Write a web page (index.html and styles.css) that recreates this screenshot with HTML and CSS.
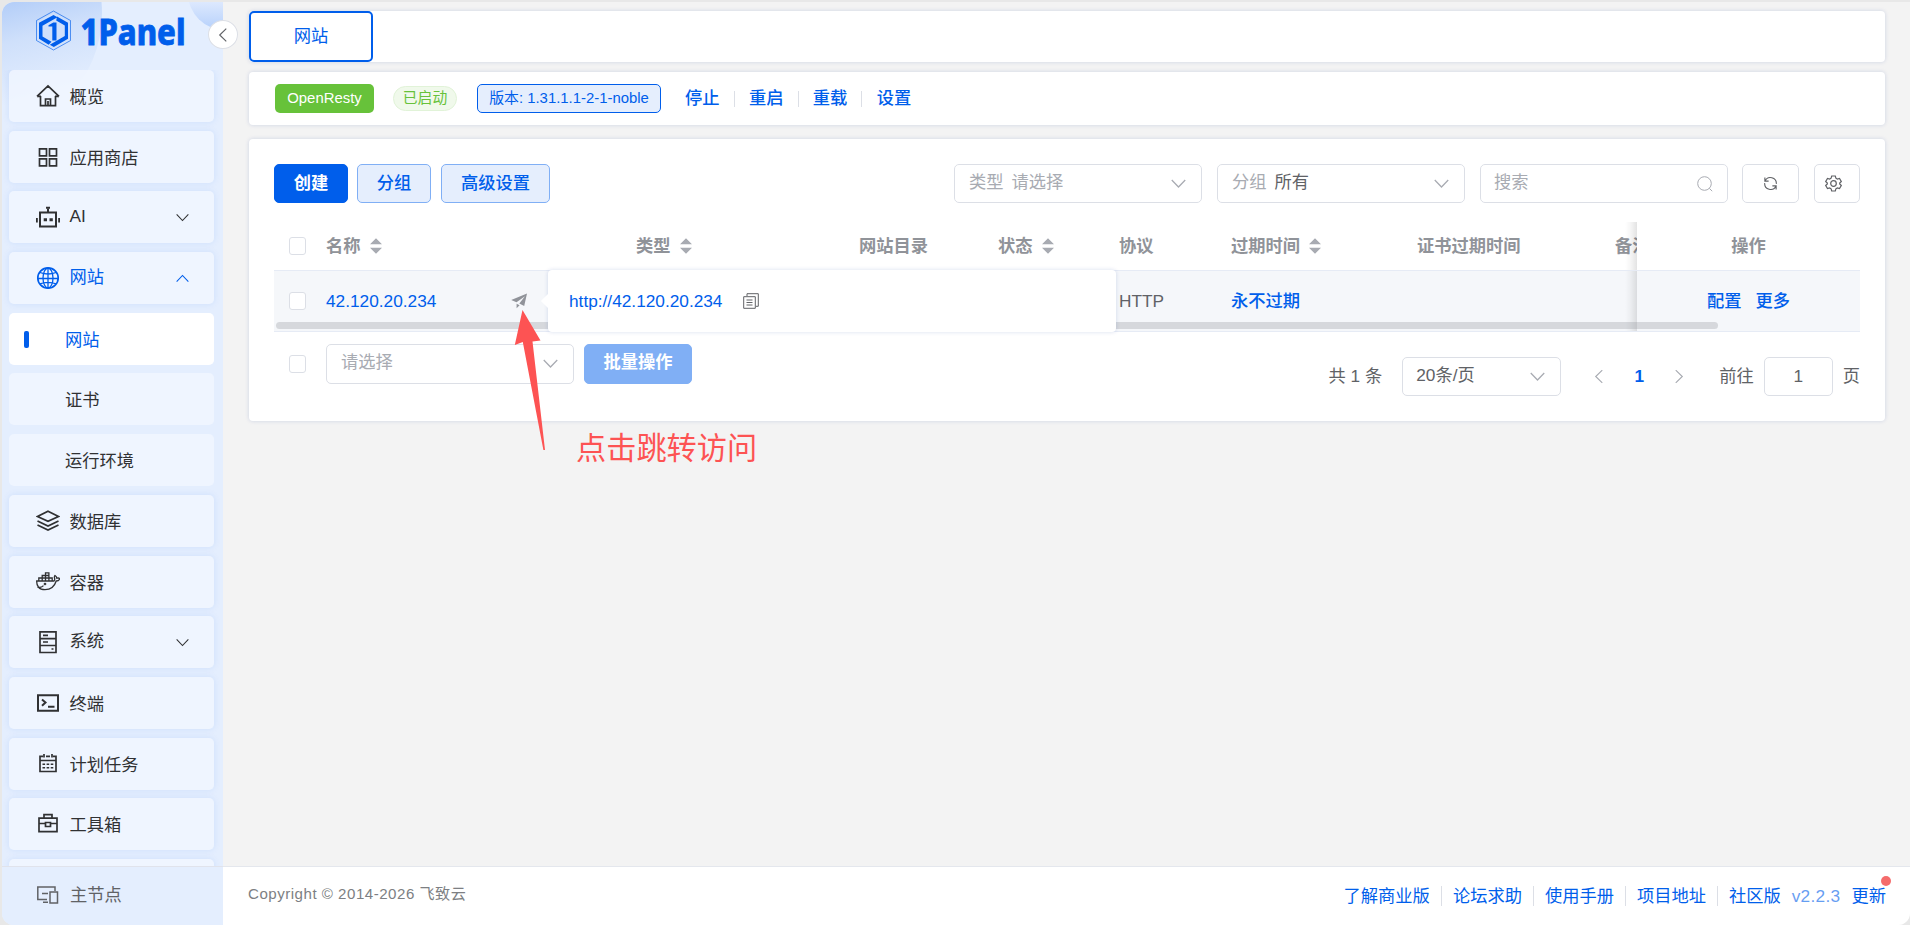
FILE: index.html
```html
<!DOCTYPE html>
<html lang="zh-CN">
<head>
  <meta charset="UTF-8" />
  <meta name="viewport" content="width=device-width, initial-scale=1.0"/>
  <title>网站 - 1Panel</title>
  <link rel="stylesheet" href="styles.css">
</head>
<body>
  <svg width="0" height="0" class="sprite">
    <symbol id="down" viewBox="0 0 12 12"><path d="M.6 3.2 6 8.8l5.400-5.600" fill="none" stroke="currentColor" stroke-width="1"/></symbol>
    <symbol id="up" viewBox="0 0 12 12"><path d="M.6 8.8 6 3.200l5.400 5.600" fill="none" stroke="currentColor" stroke-width="1"/></symbol>
    <symbol id="sort" viewBox="0 0 12 16"><path d="M0 6.200 6 .2l6 6zM0 9.800h12l-6 6z" fill="currentColor"/></symbol>
  </svg>

  <div class="app">
    <aside class="sidebar">
      <div class="deco"></div>
      <div class="logo">
        <svg class="logo-img" width="170" height="54" viewBox="0 0 170 54">
          <path d="M18.500 2 35.500 11.500v20L18.500 41 1.500 31.500v-20z" fill="none" stroke="#005eeb" stroke-width=".8" opacity=".8"/>
          <path d="M18.500 3.800 34 12.500v18L18.500 39.200 3 30.500v-18z" fill="#cfe0fb"/>
          <path d="M15.800 7.400 18.500 6l4 2.200L7.500 16.800v10.800l9 5.100-2.800 3L4 29.700V13.800zM22 7.600 33 13.800v15.900L18.800 38l-4-2.200 15-8.700V16.400l-8.600-5z" fill="#005eeb"/>
          <path d="M13.500 16.200l4.800-2.800h3.200v18h-4.200V17.600h-3.800z" fill="#005eeb"/>
          <text x="45.500" y="35.800" textLength="105" lengthAdjust="spacingAndGlyphs" class="logo-text">1Panel</text>
        </svg>
      </div>

      <nav class="menu">
        <a class="menu-item">
          <svg width="24" height="24" viewBox="0 0 24 24"><path d="M4.500 12v9.600h15V12M1 12.400 12 2l11 10.400M1 12.400h4M19 12.400h4M9.500 21.600V15h5v6.600M12 17v4"/></svg>
          <span>概览</span>
        </a>
        <a class="menu-item">
          <svg width="24" height="24" viewBox="0 0 24 24"><path d="M3.500 3.800h7v7h-7zM13.500 3.800h7v7h-7zM3.500 13.800h7v7h-7zM13.500 13.800h7v7h-7z"/></svg>
          <span>应用商店</span>
        </a>
        <a class="menu-item parent">
          <svg width="24" height="24" viewBox="1 0 24 24"><path d="M5 7.500h16v14H5zM13 3.500v4" stroke-width="2"/><path d="M11 2.800h4M1.800 13v4.500M24.200 13v4.500" stroke-width="2"/><path d="M8.700 14.700h3.300M14.500 14.700h3.300" stroke-width="3"/></svg>
          <span>AI</span>
          <svg class="caret"><use href="#down"/></svg>
        </a>
        <a class="menu-item parent active">
          <svg width="24" height="24" viewBox="0 0 24 24"><circle cx="12" cy="12" r="10.200"/><ellipse cx="12" cy="12" rx="5" ry="10" stroke-width="1.300"/><path d="M12 2v20M2 12.500h20M4 6.500q8 3 16 0M4 17.800q8-3 16 0" stroke-width="1.300"/></svg>
          <span>网站</span>
          <svg class="caret"><use href="#up"/></svg>
        </a>
        <a class="menu-item sub current"><span>网站</span></a>
        <a class="menu-item sub"><span>证书</span></a>
        <a class="menu-item sub"><span>运行环境</span></a>
        <a class="menu-item">
          <svg width="24" height="24" viewBox="0 0 24 24"><path d="M12 2.200 22.500 7.500 12 12.300 1.500 7.500zM1.500 12 12 17l10.500-5M1.500 16 12 21l10.500-5"/></svg>
          <span>数据库</span>
        </a>
        <a class="menu-item">
          <svg width="24" height="24" viewBox="1 0 24 24"><path d="M1.700 11H19q1-.8.6-2.700-.6-1.600.4-2.800 1.800 1 1.800 2.700 2-.5 3 .4-.8 2.300-3.600 2.400C19.500 16.500 15.500 19.700 10 19.700 4 19.700 1.500 16 1.700 11zM3.800 10.500V8h13.400v2.500M7.200 10.500V5.500h6.700M10.500 10.500v-5M13.900 10.500V2.900h-3.400v2.600M2.500 17.300q4 .5 6-1.700" stroke-width="1.300"/><circle cx="10" cy="14" r=".5"/></svg>
          <span>容器</span>
        </a>
        <a class="menu-item parent">
          <svg width="24" height="24" viewBox="0 0 24 24"><path d="M4 1.800h16v20.700H4zM4 8.700h16M4 15.500h16M7 5.300h5M7 12h5M15.500 19h2"/></svg>
          <span>系统</span>
          <svg class="caret"><use href="#down"/></svg>
        </a>
        <a class="menu-item">
          <svg width="24" height="24" viewBox="0 0 24 24"><path d="M2 4.200h20v15.600H2zM6 8.500 9.500 11.500 6 14.700M12 15.800h6.500" stroke-width="2"/></svg>
          <span>终端</span>
        </a>
        <a class="menu-item">
          <svg width="24" height="24" viewBox="0 0 24 24"><path d="M7 4.300H4v15.200h16V4.300h-3M10 4.300h4M4 8.500h16M8 2v3.500M16 2v3.500"/><path d="M6.500 12.300h11M6.500 15.800h11" stroke-dasharray="2.600 1.500" stroke-width="1.600"/></svg>
          <span>计划任务</span>
        </a>
        <a class="menu-item">
          <svg width="24" height="24" viewBox="0 0 24 24"><path d="M3 6.200h18v13.500H3zM8 6V2.600h8V6M3 11.500h6.500M14.500 11.500H21M9.500 10.500h5v4h-5z"/></svg>
          <span>工具箱</span>
        </a>
        <a class="menu-item"></a>
      </nav>

      <div class="node">
        <svg width="24" height="24" viewBox="0 0 24 24"><path d="M11 16.500H1.800V4H19v4M6 10.500h6M7 19.200h5M14 9h7.500v11H14z"/></svg>
        <span>主节点</span>
      </div>
      <button class="collapse"><svg width="14" height="14"><use href="#down"/></svg></button>
    </aside>

    <div class="main">
      <div class="card tabs"><div class="tab">网站</div></div>

      <div class="card status">
        <span class="tag tag-green">OpenResty</span>
        <span class="pill">已启动</span>
        <span class="tag tag-blue">版本: 1.31.1.1-2-1-noble</span>
        <div class="actions">
          <a>停止</a><i></i><a>重启</a><i></i><a>重载</a><i></i><a>设置</a>
        </div>
      </div>

      <div class="card content">
        <div class="toolbar">
          <button class="btn primary">创建</button>
          <button class="btn plain">分组</button>
          <button class="btn plain wide">高级设置</button>
          <div class="filters">
            <div class="select"><em>类型</em><em>请选择</em><svg class="arrow"><use href="#down"/></svg></div>
            <div class="select"><em>分组</em><span>所有</span><svg class="arrow"><use href="#down"/></svg></div>
            <div class="select search"><em>搜索</em>
              <svg width="16" height="16" viewBox="0 0 16 16"><circle cx="7.500" cy="7.500" r="6.800"/><path d="m12.300 12.300 2.900 2.900"/></svg>
            </div>
            <div class="icon-btn refresh">
              <svg width="15" height="15" viewBox="0 0 16 16"><path d="M2 1.500v4h4M2.200 5.300A6.300 6.300 0 0 1 14.200 8.400M14 14.500v-4h-4M13.800 10.700A6.300 6.300 0 0 1 1.800 7.600"/></svg>
            </div>
            <div class="icon-btn">
              <svg width="17" height="17" viewBox="0 0 17 17"><path d="M6.700 1h3.600l.6 2.200 1.400.8 2.200-.6 1.800 3.100L14.700 8v1l1.600 1.500-1.800 3.100-2.200-.6-1.400.8-.6 2.200H6.700l-.6-2.200-1.400-.8-2.200.6-1.800-3.100L2.300 9V8L.7 6.500l1.800-3.100 2.200.6 1.400-.8z"/><circle cx="8.500" cy="8.500" r="2.800"/></svg>
            </div>
          </div>
        </div>

        <div class="table">
          <div class="row head">
            <div class="c-check"><b class="checkbox"></b></div>
            <div class="c-name">名称 <svg class="sort"><use href="#sort"/></svg></div>
            <div class="c-type">类型 <svg class="sort"><use href="#sort"/></svg></div>
            <div class="c-dir">网站目录</div>
            <div class="c-status">状态 <svg class="sort"><use href="#sort"/></svg></div>
            <div class="c-proto">协议</div>
            <div class="c-expire">过期时间 <svg class="sort"><use href="#sort"/></svg></div>
            <div class="c-cert">证书过期时间</div>
            <div class="c-note">备注</div>
            <div class="c-op">操作</div>
          </div>
          <div class="row body">
            <div class="c-check"><b class="checkbox"></b></div>
            <div class="c-name"><a>42.120.20.234</a>
              <svg class="plane" width="16" height="16" viewBox="0 0 16 16"><path d="M16 .5 13.200 13 8.300 10.600 14 3.200 5.500 9.200.2 7zM5.600 10.700l3 1.500-3 3z"/></svg>
            </div>
            <div class="c-type"></div>
            <div class="c-dir"></div>
            <div class="c-status"></div>
            <div class="c-proto">HTTP</div>
            <div class="c-expire"><a class="strong">永不过期</a></div>
            <div class="c-cert"></div>
            <div class="c-note"></div>
            <div class="c-op"><a class="strong">配置</a><a class="strong">更多</a></div>
          </div>
          <div class="scrollbar"></div>
          <div class="popover">
            <a>http://42.120.20.234</a>
            <svg width="16" height="16" viewBox="0 0 16 16"><path d="M.7 3.700h11.600v11.600H.7zM4 3V.7h11.300v12.600H13M3.500 7h6M3.500 9.500h6M3.500 12h6"/></svg>
          </div>
        </div>

        <div class="bottom">
          <b class="checkbox"></b>
          <div class="select"><em>请选择</em><svg class="arrow"><use href="#down"/></svg></div>
          <button class="btn disabled">批量操作</button>
          <div class="pager">
            <span class="total">共 1 条</span>
            <div class="select size"><span>20条/页</span><svg class="arrow"><use href="#down"/></svg></div>
            <svg class="arrow prev"><use href="#down"/></svg>
            <a class="page">1</a>
            <svg class="arrow next"><use href="#down"/></svg>
            <span class="goto">前往</span>
            <div class="jump">1</div>
            <span>页</span>
          </div>
        </div>
      </div>

      <footer>
        <span class="copy">Copyright © 2014-2026 飞致云</span>
        <div class="links">
          <a>了解商业版</a><i></i><a>论坛求助</a><i></i><a>使用手册</a><i></i><a>项目地址</a><i></i><a>社区版</a>
          <a class="version">v2.2.3</a>
          <a class="update">更新</a>
        </div>
      </footer>
    </div>

    <!-- 标注 -->
    <div class="note">
      <svg width="32" height="142" viewBox="0 0 32 142"><path d="M8.500 1 26.500 31.500 18.500 32.500 31 141h-1.600L8.800 33 .8 36z"/></svg>
      <p>点击跳转访问</p>
    </div>
  </div>
</body>
</html>
```
FILE: styles.css
```css
* {
  box-sizing: border-box;
}
body {
  margin: 0;
  padding: 2px 0 0 2px;
  height: 925px;
  overflow: hidden;
  background: #e8e8e8;
  color: #606266;
  font-family: "Liberation Sans", "Noto Sans CJK SC", sans-serif;
  font-size: 17.250px;
  line-height: 24px;
}
.sprite {
  position: absolute;
}
a {
  color: #005eeb;
}
button {
  font-family: inherit;
  font-size: inherit;
  line-height: inherit;
}
svg {
  flex: none;
  fill: none;
  stroke: currentColor;
}
i {
  width: 1px;
  background: #dcdfe6;
}
.app {
  position: relative;
  display: flex;
  height: 923px;
  background: #f3f3f3;
  border-radius: 12px 0 12px 12px;
  overflow: hidden;
}

/* sidebar */
.sidebar {
  position: relative;
  display: flex;
  flex-direction: column;
  width: 221px;
  flex: none;
  background: #e4eefe;
}
.deco {
  position: absolute;
  left: 0;
  top: 0;
  width: 221px;
  height: 160px;
  overflow: hidden;
}
.deco::before,
.deco::after {
  content: "";
  position: absolute;
  border-radius: 50%;
}
.deco::before {
  left: -146px;
  top: -112px;
  width: 246px;
  height: 246px;
  background: linear-gradient(165deg, #a9c7f7 44%, #cfe0fb 62%, #e4eefe 82%);
}
.deco::after {
  left: 186px;
  top: -46px;
  width: 74px;
  height: 74px;
  background: linear-gradient(180deg, #dfeafe 60%, #b5d0fb 100%);
}
.logo {
  position: relative;
  height: 68px;
  padding: 7px 0 0 33px;
}
.logo-img {
  display: block;
  stroke: none;
  overflow: visible;
}
.logo-text {
  fill: #005eeb;
  stroke: #005eeb;
  stroke-width: .8px;
  font-family: "Noto Sans", sans-serif;
  font-size: 36px;
  font-weight: 800;
}
.menu {
  position: relative;
  display: flex;
  flex-direction: column;
  gap: 8.700px;
  height: 796px;
  padding-left: 7px;
  overflow: hidden;
}
.menu-item {
  display: flex;
  align-items: center;
  flex: none;
  width: 205px;
  height: 52px;
  padding: 2px 0 0 27px;
  background: rgba(241, 246, 255, .8);
  border-radius: 5px;
  box-shadow: 0 0 7px rgba(0, 94, 235, .1);
  color: #303133;
}
.menu-item svg {
  margin: 0 9.500px 2px 0;
  stroke-width: 1.700;
}
.menu-item.parent {
  padding-top: 0;
  padding-bottom: 2px;
}
.menu-item.parent svg {
  margin-bottom: -2px;
}
.menu-item svg.caret {
  width: 13px;
  height: 13px;
  margin: 0 25px -2px auto;
}
.menu-item.active {
  color: #005eeb;
}
.menu-item.sub {
  padding-left: 56px;
  box-shadow: none;
}
.menu-item.current {
  position: relative;
  background: #fff;
  color: #005eeb;
}
.menu-item.current::before {
  content: "";
  position: absolute;
  left: 15px;
  top: 18px;
  width: 5px;
  height: 17px;
  background: #005eeb;
  border-radius: 2px;
}
.node {
  position: relative;
  display: flex;
  align-items: center;
  gap: 10px;
  flex: 1;
  padding: 0 0 3px 34px;
  border-top: 1px solid #e0e3ec;
  background: #e4eefe;
}
.node svg {
  stroke-width: 1.500;
}
.collapse {
  position: absolute;
  left: 206px;
  top: 18px;
  width: 30px;
  height: 29px;
  display: grid;
  place-items: center;
  padding: 0;
  border: 1px solid #dcdfe6;
  border-radius: 50%;
  background: #fff;
  color: #606266;
  z-index: 2;
}
.collapse svg {
  transform: rotate(90deg);
}

/* main */
.main {
  display: flex;
  flex-direction: column;
  flex: 1;
  padding-top: 9px;
}
.card {
  flex: none;
  width: 1636px;
  margin-left: 26px;
  background: #fff;
  border-radius: 4px;
  box-shadow: 0 0 4px rgba(0, 50, 150, .16);
}
.tabs {
  height: 51px;
}
.tab {
  width: 124px;
  height: 51px;
  padding-top: 11px;
  border: 2px solid #005eeb;
  border-radius: 5px;
  color: #005eeb;
  text-align: center;
}
.status {
  display: flex;
  align-items: center;
  height: 53px;
  margin-top: 10px;
  padding-left: 26px;
}
.tag {
  height: 29px;
  border-radius: 5px;
  font-size: 14.900px;
  line-height: 28px;
  text-align: center;
}
.tag-green {
  width: 99px;
  background: #67c23a;
  color: #fff;
}
.pill {
  width: 64px;
  height: 25px;
  margin: 0 20px 0 19px;
  border: 1px solid #e1f3d8;
  border-radius: 13px;
  background: #f0f9eb;
  color: #67c23a;
  font-size: 14.800px;
  line-height: 22px;
  text-align: center;
}
.tag-blue {
  width: 184px;
  border: 1px solid #005eeb;
  background: #e5eefd;
  color: #005eeb;
  line-height: 26px;
}
.actions {
  display: flex;
  gap: 14.200px;
  padding: 0 0 1px 24px;
  font-weight: 500;
}
.actions i {
  height: 16px;
  margin-top: 5px;
}
.content {
  height: 282px;
  margin-top: 14px;
  padding: 25px 25px 0;
}
.toolbar {
  display: flex;
}
.btn {
  width: 74px;
  height: 39px;
  margin-right: 9px;
  padding: 0 0 2px;
  border: 1px solid #80aff5;
  border-radius: 5px;
  font-weight: 500;
}
.primary {
  background: #005eeb;
  border-color: #005eeb;
  color: #fff;
  font-weight: 700;
}
.plain {
  background: #e5eefd;
  color: #005eeb;
}
.wide {
  width: 109px;
  margin-left: 1px;
}
.filters {
  display: flex;
  gap: 15px;
  margin-left: auto;
}
.select {
  display: flex;
  align-items: center;
  gap: 8px;
  width: 248px;
  height: 39px;
  padding: 0 15px 3px 14px;
  border: 1px solid #dcdfe6;
  border-radius: 5px;
  background: #fff;
}
em {
  color: #a8abb2;
  font-style: normal;
}
.arrow {
  width: 15px;
  height: 15px;
  margin: 3px 0 0 auto;
  color: #a8abb2;
}
.search {
  padding-left: 13px;
  padding-right: 14px;
}
.search svg {
  margin: 3px 0 0 auto;
  color: #a8abb2;
}
.icon-btn {
  display: grid;
  place-items: center;
  width: 46px;
  height: 39px;
  border: 1px solid #dcdfe6;
  border-radius: 5px;
  padding-right: 7px;
}
.icon-btn svg {
  stroke-width: 1.200;
}
.refresh {
  width: 57px;
  margin-left: -1px;
  padding-right: 0;
}

/* table */
.table {
  position: relative;
  margin-top: 19px;
}
.row {
  display: flex;
  height: 48px;
}
.row > div {
  display: flex;
  align-items: center;
  flex: none;
  white-space: nowrap;
}
.head {
  color: #909399;
  font-weight: 700;
}
.body {
  height: 62px;
  border-top: 1px solid #e6ebf5;
  border-bottom: 1px solid #e6ebf5;
  background: #f5f7fa;
}
.sort {
  width: 12px;
  height: 16px;
  margin-left: 9px;
  stroke: none;
  color: #a8abb2;
}
.checkbox {
  display: block;
  width: 17px;
  height: 18px;
  border: 1px solid #dcdfe6;
  border-radius: 3px;
  background: #fff;
}
.c-check {
  width: 52px;
  padding-left: 15px;
}
.c-name {
  width: 310px;
}
.c-type {
  width: 223px;
}
.c-dir {
  width: 139px;
}
.c-status {
  width: 121px;
}
.c-proto {
  width: 112px;
}
.c-expire {
  width: 186px;
}
.c-cert {
  width: 198px;
}
.c-note {
  width: 22px;
  overflow: hidden;
}
.row > .c-op {
  position: relative;
  justify-content: center;
  gap: 14px;
  width: 223px;
}
.head .c-op {
  background: #fff;
}
.c-op::before {
  content: "";
  position: absolute;
  left: -12px;
  top: 0;
  bottom: 0;
  width: 12px;
  background: linear-gradient(90deg, transparent, rgba(0, 0, 0, .03) 40%, rgba(0, 0, 0, .11));
}
.strong {
  font-weight: 500;
}
.plane {
  margin-left: 75px;
  fill: #909399;
  stroke: none;
}
.scrollbar {
  position: absolute;
  left: 2px;
  top: 100px;
  width: 1442px;
  height: 7px;
  border-radius: 4px;
  background: rgba(144, 147, 153, .3);
}
.popover {
  position: absolute;
  left: 274px;
  top: 48px;
  display: flex;
  align-items: center;
  gap: 21px;
  width: 568px;
  height: 62px;
  padding-left: 21px;
  border-radius: 4px;
  background: #fff;
  box-shadow: 0 0 4px rgba(0, 50, 150, .16);
}
.popover::before {
  content: "";
  position: absolute;
  left: -5px;
  top: 26px;
  width: 10px;
  height: 10px;
  background: #fff;
  transform: rotate(45deg);
}
.bottom {
  display: flex;
  padding-top: 12px;
}
.bottom > .checkbox {
  margin: 11px 20px 0 15px;
}
.bottom > .select {
  height: 40px;
  padding-bottom: 4px;
}
.disabled {
  width: 108px;
  height: 40px;
  margin-left: 10px;
  padding-bottom: 4px;
  background: #80aff5;
  color: #fff;
  font-weight: 700;
}
.pager {
  display: flex;
  align-items: center;
  height: 39px;
  margin: 13px 0 0 auto;
}
.pager > span {
  padding-bottom: 2px;
}
.total {
  margin-right: 20px;
}
.select.size {
  width: 159px;
  margin-right: 31px;
  padding-left: 13px;
}
.pager > .arrow {
  width: 14px;
  margin: 0;
}
.prev {
  transform: rotate(90deg);
}
.next {
  transform: rotate(-90deg);
}
.page {
  width: 66px;
  padding-bottom: 1px;
  text-align: center;
  font-weight: 700;
}
.goto {
  margin: 0 10px 0 33px;
}
.jump {
  width: 69px;
  height: 39px;
  margin-right: 10px;
  border: 1px solid #dcdfe6;
  border-radius: 5px;
  line-height: 36px;
  text-align: center;
}

footer {
  display: flex;
  align-items: center;
  height: 59px;
  margin-top: auto;
  padding: 0 24px 0 25px;
  border-top: 1px solid #e4e7ed;
  background: #fff;
}
.copy {
  padding-bottom: 4px;
  color: #7d7f83;
  font-size: 15.100px;
  letter-spacing: .500px;
}
.links {
  display: flex;
  gap: 11px;
  margin-left: auto;
}
.links i {
  height: 20px;
  margin-top: 2px;
}
.version {
  opacity: .6;
  letter-spacing: .300px;
}
.update {
  position: relative;
}
.update::after {
  content: "";
  position: absolute;
  right: -5px;
  top: -8px;
  width: 10px;
  height: 10px;
  border-radius: 50%;
  background: #f56c6c;
}

.note {
  position: absolute;
  left: 512px;
  top: 307px;
  display: flex;
  align-items: flex-end;
  gap: 30px;
}
.note svg {
  fill: #fd5353;
  stroke: none;
}
.note p {
  margin: 0 0 -13px;
  color: #fd5353;
  font-size: 30.200px;
  line-height: 30px;
}
```
